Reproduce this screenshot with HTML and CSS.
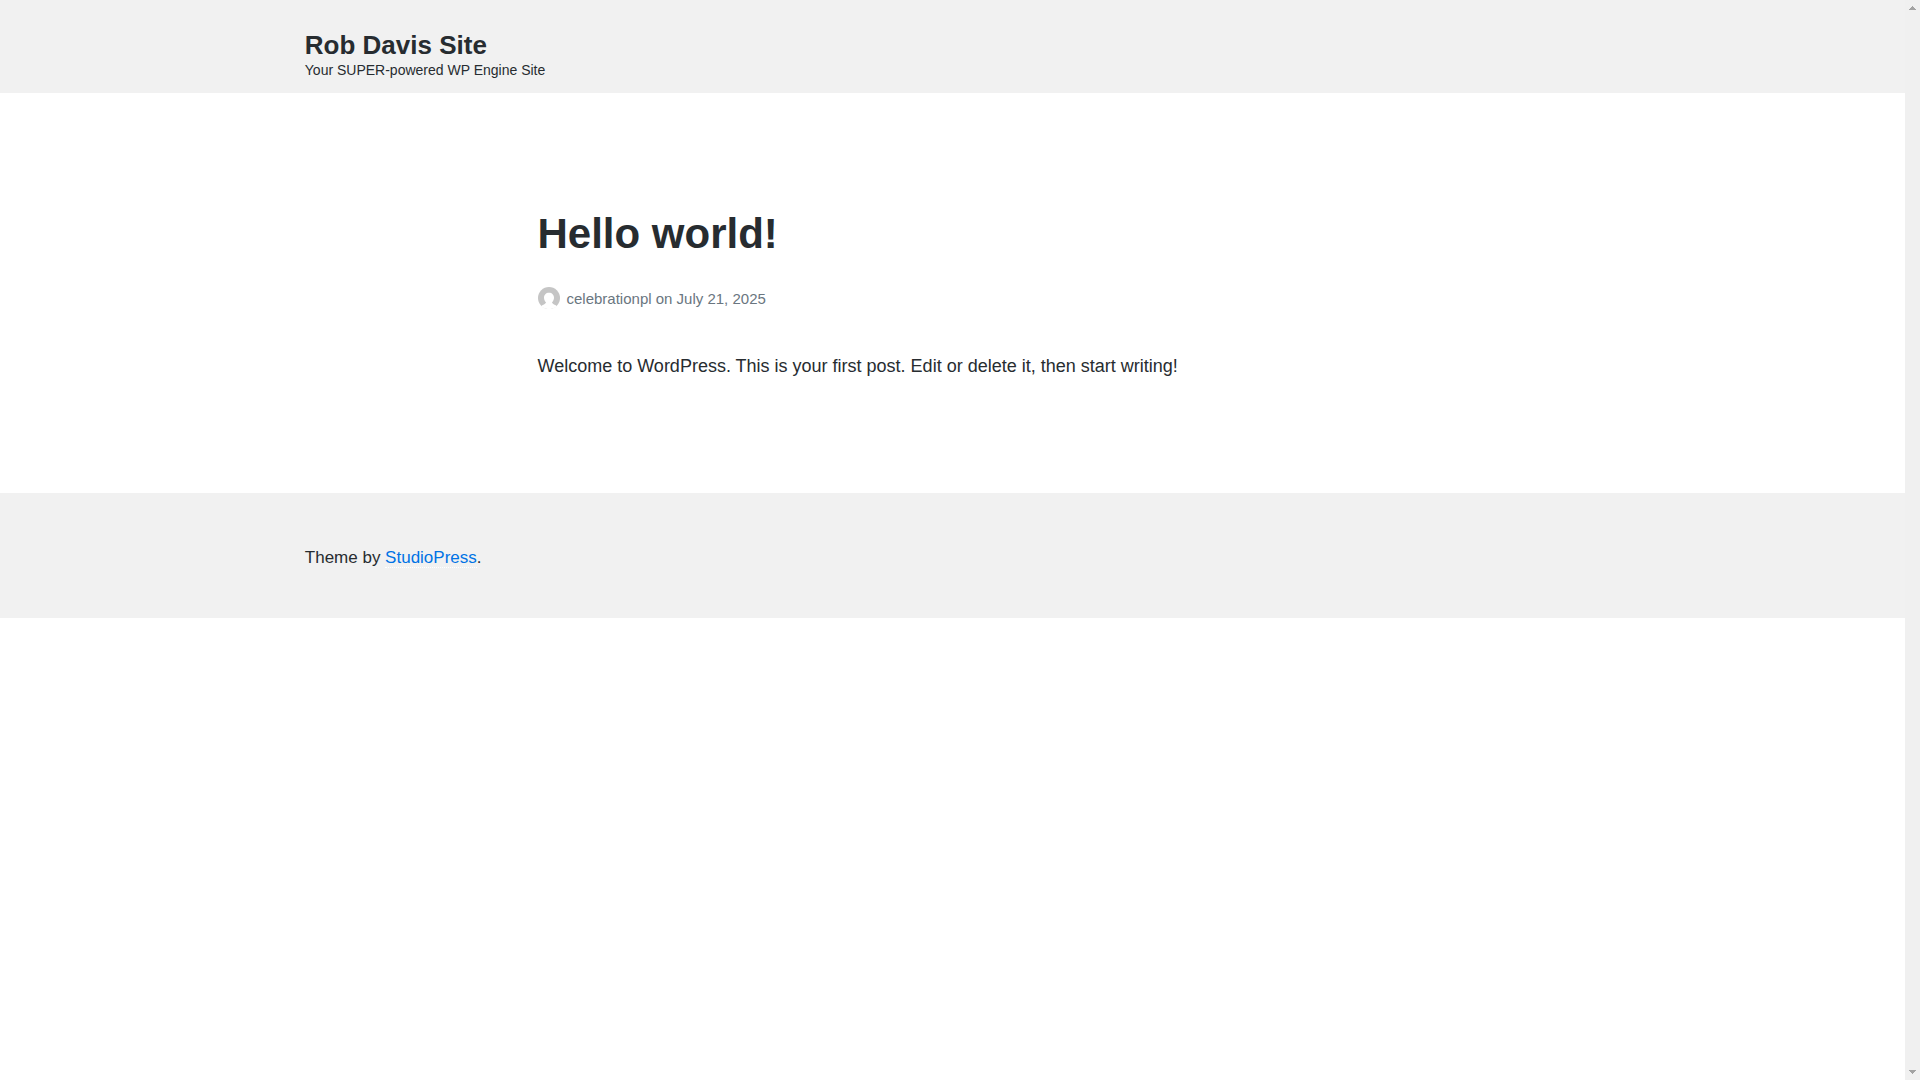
FILE: index.html
```html
<!DOCTYPE html>
<html lang="en">

<head>
    <meta charset="UTF-8">
    <meta name="viewport" content="width=device-width, initial-scale=1.0">
    <title>Hello world! - Rob Davis Site</title>
    <link rel="stylesheet" href="styles.css">
</head>

<body>
    <header class="site-header">
        <div class="wrap">
            <p class="site-title"><a href="#">Rob Davis Site</a></p>
            <p class="site-description">Your SUPER-powered WP Engine Site</p>
        </div>
    </header>

    <main class="content">
        <article class="entry">
            <h1 class="entry-title"><a href="#">Hello world!</a></h1>
            <p class="entry-meta">
                <svg class="avatar" viewBox="0 0 22 22" aria-hidden="true">
                    <circle cx="11" cy="11" r="11" fill="#c5c5c5" />
                    <path d="M11 5.800c-3 0-5 2.100-5 5 0 1.900.8 3.500 2 4.500-.1 1.300-1.500 2-3.200 2.800-.7.400-1.200.8-1.600 1.300A11 11 0 0 0 11 22a11 11 0 0 0 7.800-2.600c-.4-.5-.9-.9-1.600-1.300-1.700-.8-3.100-1.500-3.200-2.800 1.200-1 2-2.600 2-4.500 0-2.900-2-5-5-5z" fill="#fff" />
                </svg>
                <span><a href="#">celebrationpl</a> on <time datetime="2025-07-21">July 21, 2025</time></span>
            </p>
            <p class="entry-content">Welcome to WordPress. This is your first post. Edit or delete it, then start writing!</p>
        </article>
    </main>

    <footer class="site-footer">
        <div class="wrap">
            <p>Theme by <a class="credit" href="#">StudioPress</a>.</p>
        </div>
    </footer>

    <!-- always visible scroll track -->
    <div class="scroll-track" aria-hidden="true">
        <svg class="scroll-arrow" viewBox="0 0 7 4" shape-rendering="crispEdges">
            <path d="M3 0h1v1h1v1h1v1h1v1H0V3h1V2h1V1h1z" />
        </svg>
        <svg class="scroll-arrow" viewBox="0 0 7 4" shape-rendering="crispEdges">
            <path d="M0 0h7v1H6v1H5v1H4v1H3V3H2V2H1V1H0z" />
        </svg>
    </div>
</body>

</html>
```

FILE: styles.css
```css
body {
    margin: 0;
    padding-right: 15px;
    background-color: #fff;
    color: #272c30;
    font-family: "Liberation Sans", Arial, sans-serif;
    font-size: 18px;
    line-height: 30px;
}

h1,
p {
    margin: 0;
}

a {
    color: inherit;
    text-decoration: none;
}

.wrap {
    width: 68%;
    margin: 0 auto;
}

.site-header {
    padding: 30px 0 13px;
    background-color: #f1f1f1;
}

.site-title {
    font-size: 26px;
    font-weight: bold;
}

.site-description {
    font-size: 14px;
    line-height: 20px;
}

.content {
    padding: 116px 20px 112px;
}

.entry {
    max-width: 830px;
    margin: 0 auto;
}

.entry-title {
    font-size: 42px;
    line-height: 50px;
}

.entry-meta {
    display: flex;
    gap: 7px;
    margin: 28px 0 40px;
    color: #6a7680;
    font-size: 15px;
    line-height: 24px;
}

.avatar {
    width: 22px;
    height: 22px;
}

.site-footer {
    padding: 52px 0 48px;
    background-color: #f1f1f1;
    font-size: 17px;
    line-height: 25px;
}

.credit {
    border-bottom: 1px dotted #fff;
    color: #0073e5;
}

.credit:hover {
    border-bottom-color: #0073e5;
}

.scroll-track {
    position: fixed;
    top: 0;
    right: 0;
    bottom: 0;
    display: flex;
    flex-direction: column;
    justify-content: space-between;
    align-items: center;
    box-sizing: border-box;
    width: 15px;
    padding: 6px 0;
    background-color: #f0f0f0;
}

.scroll-arrow {
    width: 7px;
    height: 4px;
    fill: #a3a3a3;
}
```
